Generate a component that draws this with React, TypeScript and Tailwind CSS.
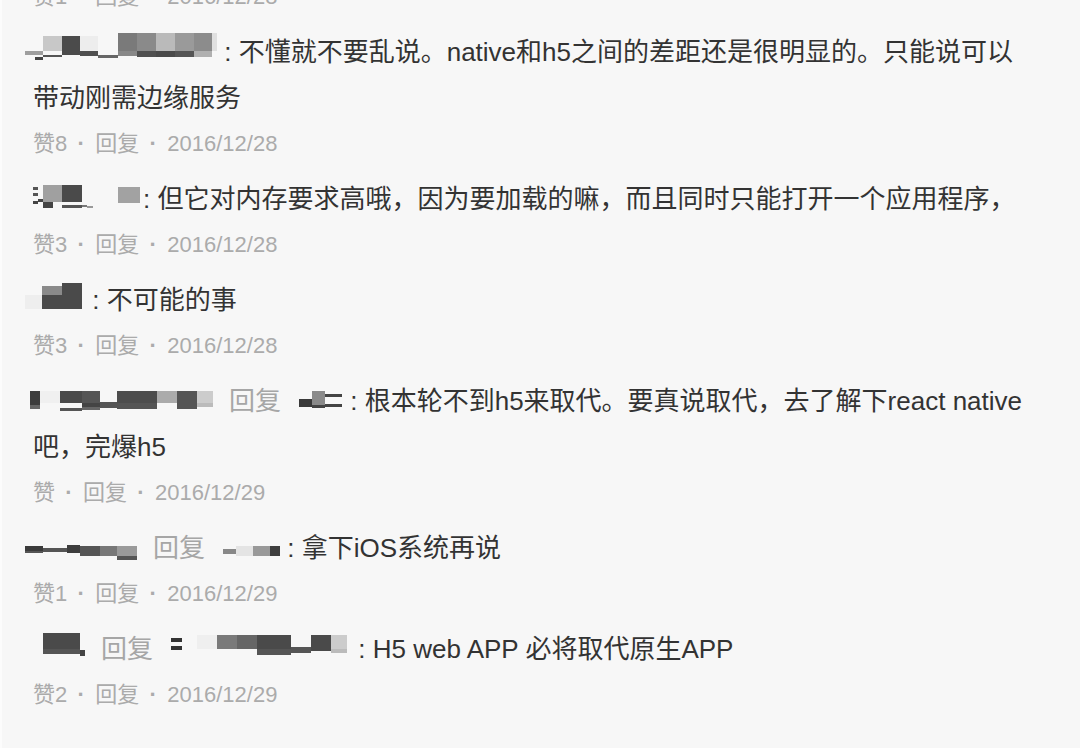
import React from "react";

type Cell = [number, string];
type Col = [number, Cell[]];

type Comment = {
  name: Col[];
  shift?: string;
  replyTo?: Col[];
  text: string;
  likes: string;
  date: string;
};

const T = "transparent";

const comments: Comment[] = [
  {
    shift: "-ml-[8px]",
    name: [
      [10, [[18, T], [4, "#9e9e9e"]]],
      [8, [[18, T], [4, "#9e9e9e"], [2, T], [3, "#444"]]],
      [19, [[3, T], [15, "#c8c8c8"], [4, T], [2, "#555"]]],
      [18, [[3, T], [19, "#4b4b4b"]]],
      [18, [[3, T], [15, "#ededed"], [5, "#4f4f4f"]]],
      [20, [[22, T], [3, "#666"]]],
      [19, [[18, "#7a7a7a"], [5, "#888"]]],
      [19, [[18, "#8a8a8a"], [6, "#505050"]]],
      [19, [[18, "#bababa"], [6, "#4a4a4a"]]],
      [19, [[18, "#9a9a9a"], [6, "#555"]]],
      [18, [[18, "#8c8c8c"], [6, "#b0b0b0"]]],
      [5, [[18, "#e0e0e0"]]],
    ],
    text: " : 不懂就不要乱说。native和h5之间的差距还是很明显的。只能说可以带动刚需边缘服务",
    likes: "赞8",
    date: "2016/12/28",
  },
  {
    name: [
      [5, [[7, T], [3, "#555"], [3, T], [3, "#555"], [5, T], [3, "#444"]]],
      [5, [[19, T], [3, "#444"]]],
      [10, [[5, T], [17, "#a0a0a0"], [6, "#444"]]],
      [9, [[5, T], [17, "#a0a0a0"]]],
      [20, [[5, T], [17, "#4a4a4a"], [3, T], [3, "#555"]]],
      [5, [[25, T], [2, "#777"]]],
      [6, [[26, T], [2, "#999"]]],
      [25, []],
      [22, [[7, T], [16, "#a2a2a2"]]],
      [3, []],
    ],
    text: ": 但它对内存要求高哦，因为要加载的嘛，而且同时只能打开一个应用程序，",
    likes: "赞3",
    date: "2016/12/28",
  },
  {
    shift: "-ml-[8px]",
    name: [
      [17, [[14, T], [14, "#eeeeee"]]],
      [20, [[5, T], [9, "#8a8a8a"], [14, "#4a4a4a"]]],
      [20, [[2, T], [26, "#4a4a4a"]]],
      [3, []],
    ],
    text: " : 不可能的事",
    likes: "赞3",
    date: "2016/12/28",
  },
  {
    shift: "-ml-[3px]",
    name: [
      [10, [[9, T], [14, "#3d3d3d"], [4, "#666"]]],
      [20, [[9, T], [12, "#f0f0f0"]]],
      [22, [[9, T], [12, "#4a4a4a"], [5, T], [3, "#555"]]],
      [18, [[9, T], [12, "#555"], [4, "#444"], [3, "#666"]]],
      [17, [[20, T], [6, "#555"]]],
      [40, [[9, T], [12, "#4d4d4d"], [6, "#555"]]],
      [20, [[9, T], [12, "#ababab"]]],
      [20, [[9, T], [12, "#555"], [6, "#555"]]],
      [16, [[9, T], [12, "#cccccc"], [4, "#bbb"]]],
    ],
    replyTo: [
      [2, []],
      [13, [[17, T], [8, "#3a3a3a"]]],
      [13, [[9, T], [14, "#8a8a8a"], [3, "#444"]]],
      [17, [[12, T], [3, "#444"], [7, T], [3, "#444"]]],
      [1, []],
    ],
    text: " : 根本轮不到h5来取代。要真说取代，去了解下react native吧，完爆h5",
    likes: "赞",
    date: "2016/12/29",
  },
  {
    shift: "-ml-[8px]",
    name: [
      [18, [[17, T], [5, "#3a3a3a"], [2, "#555"]]],
      [24, [[19, T], [4, "#555"]]],
      [13, [[16, T], [8, "#3d3d3d"]]],
      [20, [[17, T], [10, "#555"]]],
      [17, [[17, T], [10, "#777"]]],
      [20, [[17, T], [10, "#9a9a9a"], [4, "#555"]]],
    ],
    replyTo: [
      [2, []],
      [13, [[20, T], [5, "#888"]]],
      [17, [[17, T], [10, "#e4e4e4"]]],
      [17, [[17, T], [10, "#999"]]],
      [10, [[17, T], [10, "#3e3e3e"]]],
    ],
    text: " : 拿下iOS系统再说",
    likes: "赞1",
    date: "2016/12/29",
  },
  {
    shift: "ml-[10px]",
    name: [
      [37, [[3, T], [16, "#4a4a4a"], [5, "#555"]]],
      [5, [[20, T], [6, "#444"]]],
    ],
    replyTo: [
      [2, []],
      [11, [[8, T], [4, "#333"], [4, T], [4, "#333"]]],
      [15, []],
      [20, [[5, T], [14, "#efefef"]]],
      [20, [[5, T], [14, "#7a7a7a"]]],
      [20, [[5, T], [14, "#666"]]],
      [34, [[5, T], [14, "#4a4a4a"], [6, "#555"]]],
      [20, [[17, T], [6, "#555"]]],
      [20, [[5, T], [16, "#4a4a4a"]]],
      [16, [[5, T], [14, "#cccccc"], [4, "#bbb"]]],
      [4, []],
    ],
    text: " : H5 web APP 必将取代原生APP",
    likes: "赞2",
    date: "2016/12/29",
  },
];

// pixelated (blurred) user name
function Mosaic({ cols, className = "" }: { cols: Col[]; className?: string }) {
  return (
    <span className={`inline-flex h-[28px] align-middle -translate-y-[7px] ${className}`}>
      {cols.map(([w, cells], i) => (
        <span key={i} className="flex flex-col" style={{ width: w }}>
          {cells.map(([h, c], j) => (
            <span key={j} className="block shrink-0" style={{ height: h, background: c }} />
          ))}
        </span>
      ))}
    </span>
  );
}

function Meta({ likes, date }: { likes: string; date: string }) {
  return (
    <div className="text-[22px] leading-[46px] text-[#ababab] whitespace-nowrap">
      {likes}
      <span className="inline-block w-[28px] text-center font-bold">·</span>
      回复
      <span className="inline-block w-[28px] text-center font-bold">·</span>
      {date}
    </div>
  );
}

export default function App() {
  return (
    <div className="h-[748px] w-full overflow-hidden bg-[#f7f7f7] border-l-2 border-[#fcfcfc] font-['Liberation_Sans','Noto_Sans_CJK_SC',sans-serif]">
      <div className="pl-[31px] pr-[50px]">
        <div className="-mt-[26px]">
          <Meta likes="赞1" date="2016/12/28" />
        </div>
        {comments.map((c, i) => (
          <div key={i} className="mt-[9px]">
            <p className="text-[26px] leading-[46px] text-[#333333]">
              <Mosaic cols={c.name} className={c.shift} />
              {c.replyTo && (
                <>
                  <span className="mx-[16px] text-[#a6a6a6]">回复</span>
                  <Mosaic cols={c.replyTo} />
                </>
              )}
              {c.text}
            </p>
            <Meta likes={c.likes} date={c.date} />
          </div>
        ))}
      </div>
    </div>
  );
}
